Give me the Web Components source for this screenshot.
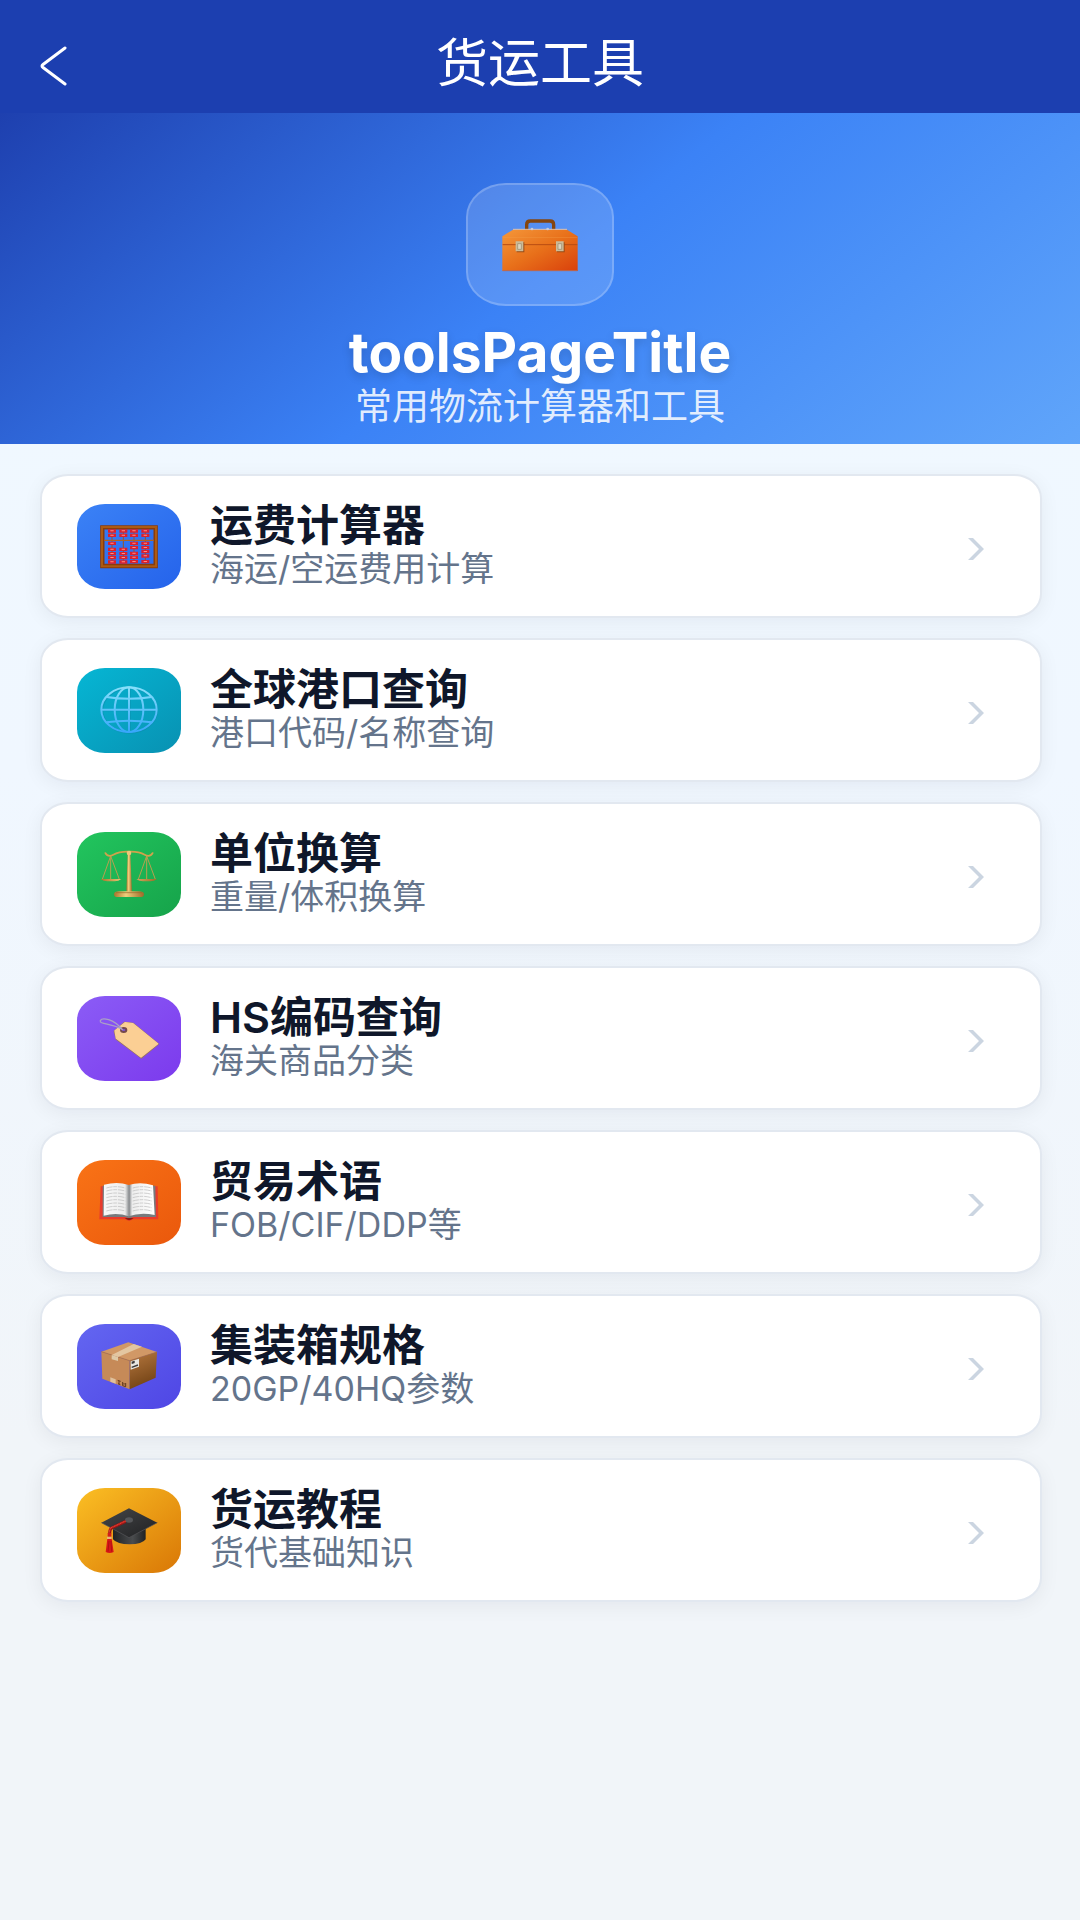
<!DOCTYPE html>
<html lang="zh-CN">
<head>
<meta charset="UTF-8">
<meta name="viewport" content="width=device-width, initial-scale=1.0">
<title>货运工具</title>
<style>
    body {
        margin: 0;
        min-height: 100vh;
        background: linear-gradient(180deg, #f0f9ff 0%, #f0f7ff 40%, #f1f5f9 75%, #f1f5f9 100%);
        font-family: Inter, "Noto Sans CJK SC", sans-serif;
    }
</style>
</head>
<body>
<tools-page></tools-page>

<script>
const ICONS = {
    toolbox: {
        box: '183 143 240 162',
        art: `
        <defs>
            <linearGradient id="g" x1="0" y1="0" x2="1" y2="1"><stop offset="0" stop-color="#f4973a"/><stop offset=".5" stop-color="#e8701a"/><stop offset="1" stop-color="#d9400c"/></linearGradient>
        </defs>
        <path d="M263 180v-17q0-11 11-11h59q11 0 11 11v17" fill="none" stroke="#84450f" stroke-width="10"/>
        <path d="M222 178h162l32 20v104H190V198z" fill="url(#g)"/>
        <path d="M222 177h162" stroke="#e3c0a8" stroke-width="3"/>
        <path d="M191 201h224" stroke="#f4a04c" stroke-width="2" opacity=".6"/>
        <path d="M191 223h224" stroke="#b84c12" stroke-width="3"/>
        <path d="M191 301h224" stroke="#b56a58" stroke-width="3"/>
        <circle cx="279" cy="176" r="4" fill="#c9cbd8"/><circle cx="326" cy="176" r="4" fill="#c9cbd8"/>
        <path d="M233 216h23v30h-23zM354 216h23v30h-23z" fill="#9a4a12"/>
        <path d="M230 213h23v30h-23zM351 213h23v30h-23z" fill="#cbbb98"/>
        <path d="M236 220h11v17h-11zM357 220h11v17h-11z" fill="#ded5bd" stroke="#95866a" stroke-width="2"/>`
    },
    abacus: {
        box: '117 94 180 144',
        art: `
        <path d="M127 110h160v116H127z" fill="none" stroke="#8a3b0b" stroke-width="13"/>
        <path d="M126 109h162v118H126z" fill="none" stroke="#ac5a12" stroke-width="6"/>
        <path d="M156 115v104M190 115v104M222 115v104M256 115v104" stroke="#9a5526" stroke-width="3"/>
        <path d="M133 149h148" stroke="#b26420" stroke-width="4"/>
        <g stroke="#d9202f" stroke-width="24" fill="none">
            <path d="M156 116v10m0 3v10m0 14v10m0 8v10m0 3v10m0 2v10m0 3v10"/>
            <path d="M190 116v10m0 3v10m0 32v10m0 3v10m0 2v10m0 3v10"/>
            <path d="M222 116v10m0 3v10m0 14v10m0 3v10m0 7v10m0 2v10m0 3v10"/>
            <path d="M256 116v10m0 3v10m0 14v10m0 3v10m0 2v10m0 3v10m0 7v10"/>
        </g>
        <g stroke="#ff8d87" stroke-width="10" fill="none">
            <path d="M156 119v3m0 10v3m0 21v3m0 15v3m0 10v3m0 9v3m0 10v3"/>
            <path d="M190 119v3m0 10v3m0 39v3m0 10v3m0 9v3m0 10v3"/>
            <path d="M222 119v3m0 10v3m0 21v3m0 10v3m0 14v3m0 9v3m0 10v3"/>
            <path d="M256 119v3m0 10v3m0 21v3m0 10v3m0 9v3m0 10v3m0 14v3"/>
        </g>`
    },
    globe: {
        box: '117 92 180 144',
        art: `
        <defs>
            <linearGradient id="g" gradientUnits="userSpaceOnUse" x1="0" y1="94" x2="0" y2="234"><stop offset="0" stop-color="#87e0fa"/><stop offset="1" stop-color="#35a5fb"/></linearGradient>
        </defs>
        <g fill="none" stroke="#0e7f9e" stroke-width="6" opacity=".35" transform="translate(2 2)">
            <ellipse cx="207" cy="163" rx="82" ry="67"/><path d="M207 96v134M125 163h164"/>
        </g>
        <g fill="none" stroke="url(#g)" stroke-width="6">
            <ellipse cx="207" cy="163" rx="83" ry="67"/>
            <ellipse cx="207" cy="163" rx="43" ry="67"/>
            <path d="M139 125q68 11 136 0M139 201q68 -10 136 0"/>
        </g>
        <path d="M204 96h6v134h-6zM124 160h166v6H124z" fill="url(#g)"/>`
    },
    scales: {
        box: '117 90 180 144',
        art: `
        <defs>
            <linearGradient id="g"><stop offset="0" stop-color="#a9742c"/><stop offset=".4" stop-color="#f0cf7c"/><stop offset="1" stop-color="#9c6a28"/></linearGradient>
        </defs>
        <g fill="none" stroke="#b7a04f" stroke-width="3">
            <path d="M152 108l-25 70M152 108v70M152 108l26 70M260 108l-25 70M260 108v70M260 108l26 70"/>
        </g>
        <path d="M136 99q8 14 24 5q18-10 47-9q30-1 47 9q16 9 24-5" fill="none" stroke="#d1a24c" stroke-width="5" stroke-linecap="round"/>
        <path d="M203 102h8l5 116h-17z" fill="url(#g)"/>
        <circle cx="207" cy="99" r="7" fill="#ecc77a"/>
        <path d="M122 177h62q-8 7-20 7h-22q-12 0-20-7zM229 177h62q-8 7-20 7h-22q-12 0-20-7z" fill="url(#g)"/>
        <path d="M162 222q1-8 15-8h60q14 0 15 8q0 9-8 9h-74q-8 0-8-9z" fill="url(#g)"/>
        <path d="M168 218h78" stroke="#98672a" stroke-width="2"/>`
    },
    tag: {
        box: '117 87 180 144',
        art: `
        <path d="M163 139l31-27 25 3 76 62-51 42-75-56z" fill="#9b7562" stroke="#9b7562" stroke-width="4" stroke-linejoin="round"/>
        <path d="M165 137l30-24 24 3 74 60-50 40-74-56z" fill="#fbcf94" stroke="#fbcf94" stroke-width="4" stroke-linejoin="round"/>
        <ellipse cx="191" cy="135" rx="8" ry="6" fill="#7f57d5" stroke="#75484d" stroke-width="6"/>
        <path d="M188 135C160 100 126 97 121 107c-4 11 35 8 66 26" fill="none" stroke="#aaa0c6" stroke-width="4"/>`
    },
    book: {
        box: '117 91 180 144',
        art: `
        <defs>
            <linearGradient id="g"><stop offset="0" stop-color="#f8f8f8"/><stop offset=".42" stop-color="#ededed"/><stop offset=".5" stop-color="#85888b"/><stop offset=".56" stop-color="#ededed"/><stop offset="1" stop-color="#fff"/></linearGradient>
        </defs>
        <path d="M122 116h171l2 99h-75q-13 8-25 0h-77z" fill="#e83b2c"/>
        <path d="M128 114v94h68q11 7 23 0h69l-2-94z" fill="#777a7d"/>
        <path d="M194 211q13 13 27 0z" fill="#8e1911"/>
        <path d="M132 111q41-10 74 1q35-11 73 1l5 89q-43-9-78 4q-35-13-75-2z" fill="url(#g)"/>
        <g fill="none" stroke="#b9b9b9" stroke-width="2" stroke-dasharray="19 2 11 3">
            <path d="M139 121q28-8 57 0M139 130q28-8 57 0M139 140q28-8 57 0M139 150q28-8 57 0M139 160q28-8 57 0M139 170q28-8 57 0M139 180q28-8 57 0M139 190q28-8 57 0"/>
            <path d="M218 121q28-8 57 0M218 130q28-8 57 0M218 140q28-8 57 0M218 150q28-8 57 0M218 160q28-8 57 0M218 170q28-8 57 0M218 180q28-8 57 0M218 190q28-8 57 0"/>
        </g>`
    },
    parcel: {
        box: '117 91 180 144',
        art: `
        <defs>
            <linearGradient id="g" x1="0" y1="0" x2=".3" y2="1"><stop offset="0" stop-color="#b6783f"/><stop offset="1" stop-color="#744416"/></linearGradient>
        </defs>
        <path d="M124 120l81-28 86 29-82 26z" fill="#d19866"/>
        <path d="M124 120l85 27v86l-82-32z" fill="#c68a58"/>
        <path d="M291 121l-82 26v86l78-35z" fill="url(#g)"/>
        <path d="M124 120l85 27 82-26" fill="none" stroke="#a96c39" stroke-width="2"/>
        <path d="M221 97l25 8-72 31-19-6z" fill="#e3c6a1"/>
        <path d="M155 130l19 6v12l-19-5z" fill="#dfc9a6"/>
        <path d="M151 197l16 6v13l-16-6z" fill="#dfc09c"/>
        <path d="M212 149l25-8v24l-25 9z" fill="#e9e7e1"/>
        <path d="M215 152l9-3M215 155l9-3M215 167l19-7" stroke="#3c3a3b" stroke-width="4"/>
        <path d="M173 206l9 3m-5-1v10m-3-2l7 3M188 211v11l9 3v-11m-5 0v5" fill="none" stroke="#61371b" stroke-width="3"/>`
    },
    cap: {
        box: '117 89 180 144',
        art: `
        <defs>
            <linearGradient id="g"><stop offset="0" stop-color="#202224"/><stop offset=".6" stop-color="#4a4c4e"/><stop offset="1" stop-color="#202224"/></linearGradient>
            <linearGradient id="t" x1="0" y1="0" x2="1" y2="1"><stop offset="0" stop-color="#454648"/><stop offset="1" stop-color="#202123"/></linearGradient>
        </defs>
        <path d="M159 155h98v34q-10 15-48 15t-50-15z" fill="url(#g)"/>
        <path d="M124 139l83-43 85 43-85 45z" fill="url(#t)"/>
        <path d="M124 139l83 45 85-45" fill="none" stroke="#58585a" stroke-width="2"/>
        <ellipse cx="207" cy="131" rx="12" ry="8" fill="#55575a"/>
        <path d="M197 135l-42 20q-6 4-6 17" fill="none" stroke="#951616" stroke-width="9"/>
        <path d="M197 134l-43 20q-6 4-6 17" fill="none" stroke="#e33b2e" stroke-width="4" stroke-dasharray="4 1"/>
        <path d="M143 170h11v18h-11z" fill="#d21c1c"/>
        <path d="M142 187h13l6 40q-12 6-24 0z" fill="#d91717"/>
        <path d="M147 194l-3 32M153 194l2 32" stroke="#9d0f0f" stroke-width="2"/>
        <path d="M141 181h14v7h-14z" fill="#e6ba72"/>`
    }
};

class ToolIcon extends HTMLElement {
    connectedCallback() {
        const icon = ICONS[this.getAttribute('name')];
        this.attachShadow({ mode: 'open' });
        this.shadowRoot.innerHTML = /*html*/`
        <style>
            :host { display: block; width: 60px; height: 48px; }
            svg { display: block; width: 100%; height: 100%; }
        </style>
        <svg viewBox="${icon.box}" aria-hidden="true">${icon.art}</svg>
        `;
    }
}

class PageHeader extends HTMLElement {
    connectedCallback() {
        this.attachShadow({ mode: 'open' });
        this.shadowRoot.innerHTML = /*html*/`
        <style>
            :host { display: block; background: #1c3fb0; color: #fff; }
            header {
                display: grid;
                grid-template-columns: 1fr auto 1fr;
                align-items: center;
                padding: 31px 40px 16px;
            }
            button {
                justify-self: start;
                padding: 0;
                border: 0;
                background: none;
                color: inherit;
            }
            svg { display: block; width: 28px; height: 44px; }
            h1 { margin: 0; font-size: 52px; line-height: 66px; font-weight: 400; }
        </style>
        <header>
            <button type="button" aria-label="返回">
                <svg viewBox="0 0 28 44" fill="none" stroke="currentColor" stroke-width="3" stroke-linecap="round" stroke-linejoin="round"><path d="M25 6L3 22.500Q1 24 3 25.500L25 42"/></svg>
            </button>
            <h1><slot></slot></h1>
        </header>
        `;
    }
}

class HeroBanner extends HTMLElement {
    connectedCallback() {
        this.attachShadow({ mode: 'open' });
        this.shadowRoot.innerHTML = /*html*/`
        <style>
            :host {
                display: block;
                background: linear-gradient(141deg, #1e40af 0%, #3b82f6 50%, #60a5fa 100%);
                color: #fff;
            }
            section {
                display: flex;
                flex-direction: column;
                align-items: center;
                padding: 70px 40px 14px;
            }
            .badge {
                display: grid;
                place-items: center;
                box-sizing: border-box;
                width: 148px;
                height: 123px;
                margin-bottom: 14px;
                border: 2px solid rgba(255, 255, 255, .2);
                border-radius: 40px / 34px;
                background: rgba(255, 255, 255, .15);
            }
            tool-icon { width: 80px; height: 54px; }
            h2 {
                margin: 0;
                font-size: 55px;
                line-height: 64px;
                font-weight: 700;
                text-shadow: 0 4px 10px rgba(0, 0, 0, .15);
            }
            p { margin: 0; font-size: 37px; line-height: 46px; color: rgba(255, 255, 255, .85); }
        </style>
        <section>
            <div class="badge"><tool-icon name="toolbox"></tool-icon></div>
            <h2><slot name="title"></slot></h2>
            <p><slot name="subtitle"></slot></p>
        </section>
        `;
    }
}

class ToolCard extends HTMLElement {
    connectedCallback() {
        this.attachShadow({ mode: 'open' });
        this.shadowRoot.innerHTML = /*html*/`
        <style>
            :host { display: block; }
            a {
                display: flex;
                align-items: center;
                gap: 29px;
                padding: 26px 55px 26px 35px;
                border: 2px solid #e2e8f0;
                border-radius: 28px / 24px;
                background: #fff;
                box-shadow: 0 4px 20px rgba(15, 23, 42, .06);
                color: #0f172a;
                text-decoration: none;
            }
            .tile {
                display: grid;
                place-items: center;
                flex: none;
                width: 104px;
                height: 85px;
                border-radius: 28px / 24px;
                background: linear-gradient(141deg, var(--from), var(--to));
            }
            .text { flex: 1; min-width: 0; }
            h3 { margin: 0; font-size: 43px; line-height: 46px; font-weight: 600; }
            p { margin: 0; font-size: 34px; line-height: 42px; color: #64748b; }
            .arrow { display: block; flex: none; width: 18px; height: 30px; }
        </style>
        <a href="#${this.getAttribute('icon')}">
            <div class="tile"><tool-icon name="${this.getAttribute('icon')}"></tool-icon></div>
            <div class="text">
                <h3><slot name="title"></slot></h3>
                <p><slot name="subtitle"></slot></p>
            </div>
            <svg class="arrow" viewBox="0 0 18 30" aria-hidden="true"><path d="M1 7h5l11 11-11 11H1l11-11z" fill="#cbd5e1"/></svg>
        </a>
        `;
    }
}

class ToolsPage extends HTMLElement {
    connectedCallback() {
        this.attachShadow({ mode: 'open' });
        this.render();
    }

    get tools() {
        return [
            ['abacus', '运费计算器', '海运/空运费用计算', '#3b82f6', '#2563eb'],
            ['globe', '全球港口查询', '港口代码/名称查询', '#06b6d4', '#0891b2'],
            ['scales', '单位换算', '重量/体积换算', '#22c55e', '#16a34a'],
            ['tag', 'HS编码查询', '海关商品分类', '#8b5cf6', '#7c3aed'],
            ['book', '贸易术语', 'FOB/CIF/DDP等', '#f97316', '#ea580c'],
            ['parcel', '集装箱规格', '20GP/40HQ参数', '#6366f1', '#4f46e5'],
            ['cap', '货运教程', '货代基础知识', '#fbbf24', '#d97706']
        ];
    }

    render() {
        this.shadowRoot.innerHTML = /*html*/`
        <style>
            :host { display: block; }
            main { display: grid; gap: 20px; padding: 30px 38px 40px 40px; }
        </style>
        <page-header>货运工具</page-header>
        <hero-banner>
            <span slot="title">toolsPageTitle</span>
            <span slot="subtitle">常用物流计算器和工具</span>
        </hero-banner>
        <main>
            ${this.tools.map(([icon, title, subtitle, from, to]) => /*html*/`
            <tool-card icon="${icon}" style="--from: ${from}; --to: ${to}">
                <span slot="title">${title}</span>
                <span slot="subtitle">${subtitle}</span>
            </tool-card>`).join('')}
        </main>
        `;
    }
}

window.customElements.define('tool-icon', ToolIcon);
window.customElements.define('page-header', PageHeader);
window.customElements.define('hero-banner', HeroBanner);
window.customElements.define('tool-card', ToolCard);
window.customElements.define('tools-page', ToolsPage);
</script>
</body>
</html>
